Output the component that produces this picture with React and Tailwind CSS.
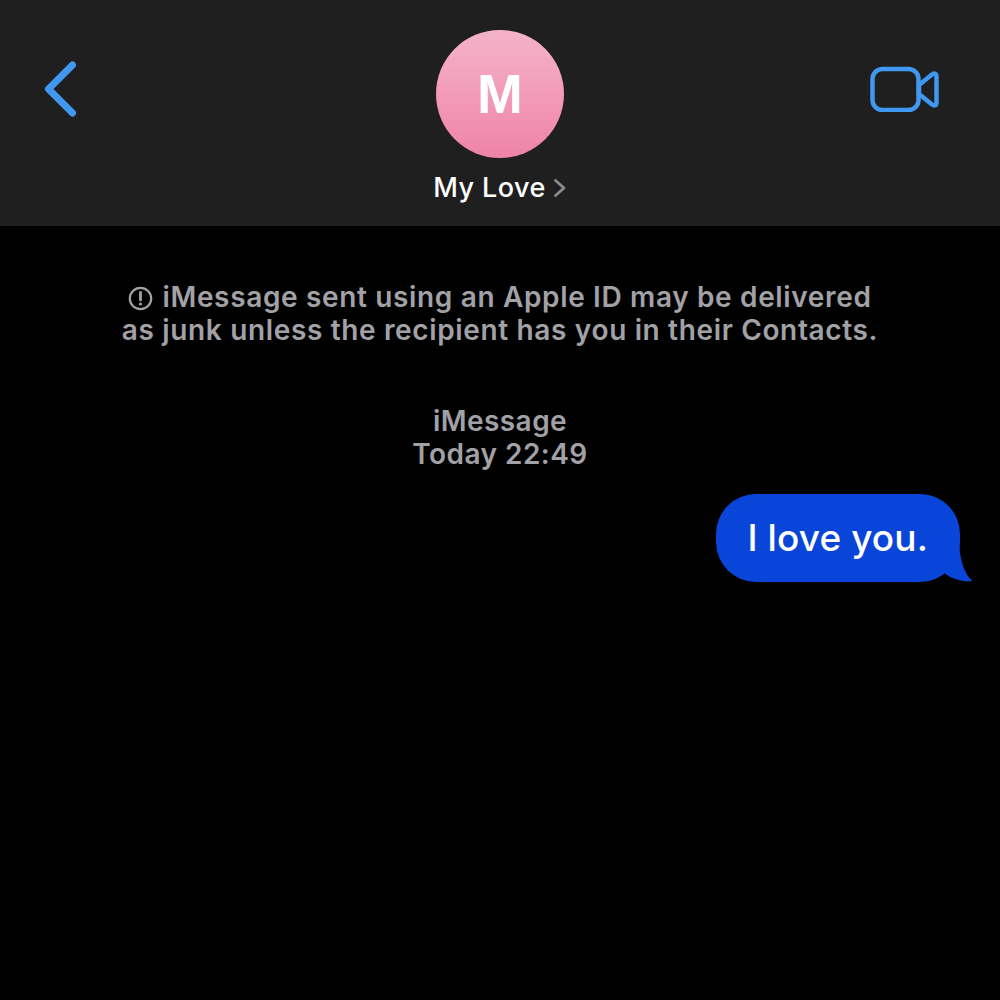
const font = "font-['Inter','Liberation_Sans',sans-serif]"

const BackIcon = () => (
  <svg width="36" height="60" viewBox="0 0 36 60" fill="none" className="mt-[59px] ml-[42px]">
    <path d="M30.5 6 L6.5 30 L30.5 54" stroke="#4198f0" strokeWidth="7" strokeLinecap="round" strokeLinejoin="round" />
  </svg>
)

const VideoIcon = () => (
  <svg width="70" height="46" viewBox="0 0 70 46" fill="none" className="mt-[66px] mr-[60px] justify-self-end">
    <rect x="2.5" y="3" width="46" height="41" rx="10" stroke="#4198f0" strokeWidth="4.5" />
    <path d="M49 19 L62 8.5 C64.5 6.7 66.5 7.5 66.5 10.5 V36.5 C66.5 39.5 64.5 40.3 62 38.5 L49 28 Z" stroke="#4198f0" strokeWidth="4.5" strokeLinejoin="round" />
  </svg>
)

const InfoIcon = () => (
  <svg width="25" height="25" viewBox="0 0 25 25" fill="none" className="inline-block align-[-4px] mr-[9px]">
    <circle cx="12.5" cy="12.5" r="10.7" stroke="#a1a1a6" strokeWidth="2.2" />
    <path d="M12.5 6.5 V14" stroke="#a1a1a6" strokeWidth="2.8" strokeLinecap="round" />
    <circle cx="12.5" cy="18" r="1.6" fill="#a1a1a6" />
  </svg>
)

const Header = () => (
  <div className="grid grid-cols-[1fr_auto_1fr] h-[226px] bg-[#1f1f1f]">
    <BackIcon />
    <div className="flex flex-col items-center pt-[30px]">
      <div className="flex items-center justify-center w-[128px] h-[128px] rounded-full bg-gradient-to-b from-[#f4b3ca] to-[#ee83a6]">
        <span className="text-white text-[55px] leading-none font-bold font-['Liberation_Sans',sans-serif]">M</span>
      </div>
      <div className="flex items-center mt-[14px] text-[27px] leading-[32px] font-medium text-white tracking-[0.45px]">
        My Love
        <svg width="14" height="20" viewBox="0 0 14 20" fill="none" className="ml-[7px]">
          <path d="M2.5 2.5 L11 10 L2.5 17.5" stroke="#8b8b8f" strokeWidth="2.8" strokeLinecap="round" strokeLinejoin="round" />
        </svg>
      </div>
    </div>
    <VideoIcon />
  </div>
)

const Bubble = () => (
  <div className="flex justify-end pr-[40px] mt-[23px]">
    <div className="relative flex items-center h-[88px] pl-[31px] pr-[32px] rounded-[40px] bg-[#0a45da] text-white text-[37px] font-medium tracking-[0.1px]">
      I love you.
      <svg width="36" height="44" viewBox="0 0 36 44" className="absolute right-[-13px] bottom-0">
        <path d="M22 0 C22 20 27 36 35.5 43 C28 44 16 42 7 35 L0 30 L0 0 Z" fill="#0a45da" />
      </svg>
    </div>
  </div>
)

export default function App() {
  return (
    <div className={`w-[1000px] h-[1000px] overflow-hidden bg-black ${font}`}>
      <Header />
      <div className="pt-[55px] text-center text-[28px] leading-[33px] font-semibold text-[#a1a1a6] tracking-[0.65px]">
        <p><InfoIcon />iMessage sent using an Apple ID may be delivered</p>
        <p>as junk unless the recipient has you in their Contacts.</p>
      </div>
      <div className="mt-[58px] text-center text-[28px] leading-[33px] font-semibold text-[#a1a1a6] tracking-[0.45px]">
        <p>iMessage</p>
        <p>Today 22:49</p>
      </div>
      <Bubble />
    </div>
  )
}
